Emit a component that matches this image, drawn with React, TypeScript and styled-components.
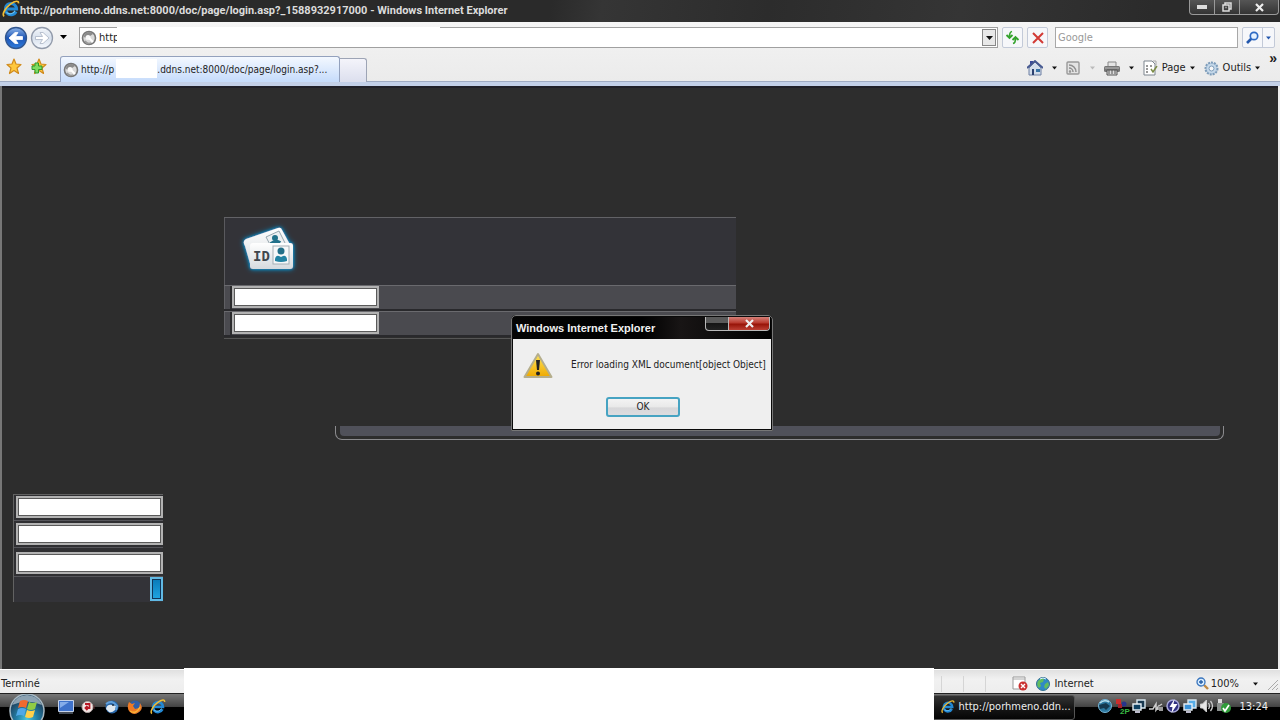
import React from "react";
import styled, { createGlobalStyle } from "styled-components";

const ui = '"DejaVu Sans Condensed", "DejaVu Sans", sans-serif';
const title = '"Liberation Sans", Arial, sans-serif';

const Global = createGlobalStyle`
  * { box-sizing: border-box; }
  body { margin: 0; background: #2d2d2d; font: 11px/14px ${ui}; color: #222; }
  button, input { font: inherit; color: inherit; }
  button { padding: 0; border: 0; background: none; }
`;

const Window = styled.div`
  position: relative;
  display: flex;
  flex-direction: column;
  min-height: 100vh;
  overflow: hidden;
`;

const TitleBar = styled.header`
  display: flex;
  align-items: flex-start;
  height: 22px;
  padding: 0 1px 0 2px;
  background: linear-gradient(100deg, #2a2a2a 0 43%, #353535 47%, #2c2c2c 60%, #353535 75%, #2b2b2b 90%);
  svg { flex: none; }
`;

const TitleText = styled.h1`
  flex: 1;
  margin: 4px 0 0;
  font: bold 11px/14px Roboto, ${title};
  color: #dcdcdc;
  white-space: nowrap;
`;

const Caption = styled.div`
  display: flex;
  height: 15px;
  border: 1px solid #999;
  border-top: 0;
  border-radius: 0 0 4px 4px;
  background: linear-gradient(#555, #343434);
  overflow: hidden;
`;

const CaptionButton = styled.button<{ $w: number }>`
  display: grid;
  place-items: center;
  width: ${(p) => p.$w}px;
  & + & { border-left: 1px solid #999; }
`;

const NavBar = styled.nav`
  display: flex;
  align-items: center;
  height: 31px;
  padding: 0 5px 0 4px;
  background: linear-gradient(#f5f5f5, #efefef);
`;

const NavIcons = styled.div`
  display: flex;
  align-items: center;
  width: 75px;
  button { display: flex; }
`;

const Address = styled.div`
  position: relative;
  flex: 1;
  display: flex;
  align-items: center;
  gap: 2px;
  height: 21px;
  padding-left: 1px;
  border: 1px solid #a0a0a0;
  background: #fff;
`;

const PlainInput = styled.input`
  flex: 1;
  min-width: 0;
  padding: 0;
  border: 0;
  outline: 0;
  background: none;
  &::placeholder { color: #999; opacity: 1; }
`;

const AddressMask = styled.span`
  position: absolute;
  left: 37px;
  top: -1px;
  width: 323px;
  height: 19px;
  background: #fff;
`;

const DropButton = styled.button`
  display: grid;
  place-items: center;
  width: 14px;
  height: 17px;
  margin-right: 1px;
  border: 1px solid #888;
  background: #e8e8e8;
`;

const ToolButton = styled.button`
  display: grid;
  place-items: center;
  width: 21px;
  height: 21px;
  margin-left: 4px;
  border: 1px solid #c3cad8;
  border-radius: 2px;
  background: #f6f7fa;
`;

const Search = styled.div`
  display: flex;
  width: 183px;
  height: 21px;
  margin: 0 4px 0 7px;
  padding-left: 2px;
  border: 1px solid #a8a8a8;
  background: #fff;
`;

const SearchButtons = styled.div`
  display: flex;
  height: 21px;
  border: 1px solid #c3cad8;
  border-radius: 2px;
  background: #f6f7fa;
  button { display: grid; place-items: center; width: 19px; }
  button + button { width: 12px; border-left: 1px solid #c3cad8; }
`;

const TabBar = styled.div`
  display: flex;
  align-items: flex-end;
  height: 33px;
  padding-left: 6px;
  border-bottom: 4px solid #c3d0e8;
  background: linear-gradient(#efefef, #ebebeb);
  box-shadow: inset 0 -1px #9fabc3;
`;

const Favorites = styled.div`
  display: flex;
  gap: 9px;
  width: 54px;
  padding-bottom: 7px;
  button { display: flex; }
`;

const Tab = styled.a`
  position: relative;
  display: flex;
  align-items: center;
  gap: 2px;
  width: 280px;
  height: 26px;
  padding-left: 2px;
  border: 1px solid #93a1bd;
  border-bottom: 0;
  border-radius: 3px 3px 0 0;
  background: linear-gradient(#f3f8ff, #c5dbfb);
  color: #222;
  font-size: 10px;
  text-decoration: none;
  white-space: nowrap;
  svg { flex: none; }
`;

const TabMask = styled.span`
  position: absolute;
  left: 55px;
  top: 2px;
  width: 41px;
  height: 19px;
  background: #fff;
`;

const TabHost = styled.span`
  margin-left: 41px;
`;

const NewTab = styled.button`
  width: 27px;
  height: 24px;
  border: 1px solid #9da4b5;
  border-bottom: 0;
  border-left: 0;
  border-radius: 0 3px 0 0;
  background: linear-gradient(#f4f4fa, #dcdfee);
`;

const Commands = styled.div`
  display: flex;
  align-items: center;
  gap: 9px;
  height: 28px;
  margin-left: auto;
  padding-right: 3px;
`;

const Command = styled.button<{ $gap?: number }>`
  display: flex;
  align-items: center;
  gap: ${(p) => p.$gap ?? 4}px;
`;

const More = styled.button`
  align-self: flex-start;
  font: bold 14px/8px ${title};
`;

const Page = styled.main`
  position: relative;
  flex: 1;
  display: flex;
  flex-direction: column;
  align-items: flex-start;
  padding-top: 131px;
  border-left: 2px solid #777;
  border-right: 2px solid #eee;
  background: #2d2d2d;
  box-shadow: inset 0 2px #202028;
`;

const LoginForm = styled.form`
  width: calc(40% + 2px);
  margin-left: 222px;
  border-top: 1px solid #626266;
`;

const LoginHead = styled.div`
  height: 67px;
  padding: 2px 0 0 11px;
  border-left: 1px solid #5a5a5e;
  background: #333338;
`;

const LoginRow = styled.div`
  display: flex;
  height: 26px;
  border-top: 1px solid #6a6a6e;
  border-bottom: 2px solid #29292c;
  background: #4a4a4f;
`;

const Gutter = styled.span`
  width: 8px;
  border-left: 1px solid #606064;
  box-shadow: inset -2px 0 #2c2c2e;
`;

const Field = styled.input`
  width: 147px;
  height: 22px;
  border: 2px solid #b2b2b2;
  outline: 0;
  background: #fff;
  box-shadow: inset 0 0 0 1px #5a5a5a;
`;

const LoginFoot = styled.div`
  height: 2px;
  border-bottom: 1px solid #555;
`;

const PanelFoot = styled.div`
  align-self: stretch;
  height: 14px;
  margin: 87px 54px 0 333px;
  padding: 0 3px 3px 4px;
  border: 1px solid #8b8b8e;
  border-top: 0;
  border-radius: 0 0 7px 7px;
  &::before {
    content: "";
    display: block;
    height: 10px;
    border-radius: 0 0 4px 4px;
    background: #50515a;
  }
`;

const SideForm = styled.form`
  display: flex;
  flex-direction: column;
  width: 150px;
  margin: 54px 0 66px 11px;
  border-top: 1px solid #626262;
  border-left: 1px solid #626262;
`;

const SideRow = styled.div<{ $h: number }>`
  display: flex;
  align-items: flex-end;
  height: ${(p) => p.$h}px;
  padding: 0 0 2px 2px;
  border-bottom: 1px solid #55555a;
  background: #2f2f32;
`;

const SideFoot = styled.div`
  display: flex;
  justify-content: flex-end;
  height: 25px;
  background: #333338;
`;

const Submit = styled.button`
  width: 13px;
  height: 24px;
  border: 2px solid #60b9e4;
  outline: 1px solid #135;
  outline-offset: -3px;
  background: linear-gradient(#087ab8, #20a5e2);
`;

const Dialog = styled.section`
  position: absolute;
  left: calc(50% - 129px);
  top: 229px;
  width: 262px;
  border: 2px solid #0a0a0a;
  border-radius: 5px 5px 0 0;
  outline: 1px solid #777;
  outline-offset: -1px;
  background: #efefef;
`;

const DialogTitle = styled.div`
  display: flex;
  align-items: flex-start;
  justify-content: space-between;
  height: 22px;
  padding: 0 1px 0 3px;
  background: linear-gradient(90deg, #050505, #000 50%, #181515 65%, #000);
  h2 {
    margin: 4px 0 0;
    font: bold 11px/14px ${title};
    color: #f0f0f0;
    white-space: nowrap;
  }
`;

const DialogCaption = styled.div`
  display: flex;
  height: 14px;
  border: 1px solid #b9b9b9;
  border-top: 0;
  border-radius: 0 0 4px 4px;
  overflow: hidden;
  background: linear-gradient(#5a5a5a 45%, #161616 50%, #222);
  span { width: 22px; }
  button {
    display: grid;
    place-items: center;
    width: 41px;
    border-left: 1px solid #b9b9b9;
    background: linear-gradient(#d58078, #b93a2e 45%, #971408 55%, #bc4034);
  }
`;

const Message = styled.div`
  display: flex;
  gap: 18px;
  padding: 12px 0 0 10px;
  svg { flex: none; }
  p { margin: 7px 0 0; font-size: 10px; white-space: nowrap; }
`;

const OkButton = styled.button`
  display: block;
  width: 74px;
  height: 20px;
  margin: 16px auto 12px 93px;
  border: 2px solid #46a3c2;
  border-radius: 3px;
  font-size: 10px;
  background: linear-gradient(#f3f3f3, #e9e9e9 50%, #d7d7d9 55%, #dcdcdf);
`;

const StatusBar = styled.footer`
  display: flex;
  align-items: center;
  justify-content: space-between;
  height: 24px;
  padding: 4px 2px 0 1px;
  border-top: 1px solid #fff;
  background: linear-gradient(#e0e0e0, #f1f1f1 40%, #ededed);
`;

const StatusGroup = styled.div`
  display: flex;
  align-items: center;
  gap: 4px;
`;

const Divider = styled.i<{ $after: number }>`
  width: 1px;
  height: 16px;
  margin-right: ${(p) => p.$after}px;
  background: #d5d5d5;
`;

const Zoom = styled.button<{ $before: number }>`
  display: flex;
  align-items: center;
  gap: 2px;
  margin-left: ${(p) => p.$before}px;
  svg:last-child { margin: 0 4px 0 12px; }
`;

const TaskBar = styled.footer`
  display: flex;
  justify-content: space-between;
  height: 27px;
  padding: 0 12px 0 8px;
  border-top: 1px solid #222;
  background: linear-gradient(#777, #454545 48%, #000 52%);
  color: #eee;
`;

const Launch = styled.div`
  display: flex;
  align-items: center;
  gap: 7px;
  button { display: flex; }
  button:first-child { align-self: flex-start; margin-right: 5px; }
`;

const Tray = styled.div`
  display: flex;
  align-items: center;
  gap: 1px;
  time { margin-left: 6px; }
  > svg { width: 16px; margin-bottom: 2px; }
`;

const TaskButton = styled.button`
  display: flex;
  align-items: center;
  gap: 3px;
  width: 143px;
  height: 25px;
  margin-right: 21px;
  padding-left: 8px;
  border: 1px solid #555;
  border-radius: 3px;
  background: linear-gradient(#333, #171717 50%, #050505);
  white-space: nowrap;
`;

const Redaction = styled.div`
  position: absolute;
  left: 184px;
  right: 346px;
  bottom: 0;
  height: 52px;
  background: #fff;
`;

const IeLogo = ({ size = 16 }: { size?: number }) => (
  <svg width={size} height={size} viewBox="0 0 16 16" fill="none">
    <path d="M12.5 10.3A5 5 0 1 1 13 8H4" stroke="#2389d4" strokeWidth="2.6" />
    <path d="M11.5 9.5A4.7 4.7 0 0 1 4 11" stroke="#6cc4f4" strokeWidth="1" />
    <path d="M2 14.5C-.5 13 3 7 7.5 3.7S15 .3 14.6 3" stroke="#f0bd35" strokeWidth="1.5" />
  </svg>
);

const Arrow = ({ color = "#111", size = 7 }: { color?: string; size?: number }) => (
  <svg width={size} height="4" viewBox="0 0 7 4"><path d="M0 0h7L3.500 4z" fill={color} /></svg>
);

const PageIcon = () => (
  <svg width="16" height="16" viewBox="0 0 16 16">
    <circle cx="8" cy="8" r="6.500" fill="#d9d9d9" stroke="#777" strokeWidth="1.600" />
    <path d="M3 7a5 5 0 0 1 9-3L9 6a3 3 0 0 0-4 2z" fill="#8b8b8b" />
    <circle cx="7" cy="7.500" r="2.500" fill="#f8f8f8" />
    <path d="M8 8l4 4" stroke="#fff" strokeWidth="2" />
    <path d="M4 11a5 5 0 0 0 6 2" stroke="#999" strokeWidth="1.500" fill="none" />
  </svg>
);

const NavCircle = ({ forward = false }: { forward?: boolean }) => {
  const id = forward ? "forwardFill" : "backFill";
  return (
    <svg width="26" height="26" viewBox="0 0 26 26">
      <defs>
        <linearGradient id={id} x2="0" y2="1">
          <stop stopColor={forward ? "#f4f7fb" : "#8db5ea"} />
          <stop offset=".5" stopColor={forward ? "#d7e0ec" : "#1e56b5"} />
          <stop offset="1" stopColor={forward ? "#f7faff" : "#2f7cdd"} />
        </linearGradient>
      </defs>
      <circle cx="12" cy="13" r="10.500" fill={`url(#${id})`} stroke={forward ? "#929bab" : "#31568e"} strokeWidth="1.3" />
      <path
        d={forward ? "M5.500 11.500h7L10 7.500h3l6 5.500-6 5.500h-3l2.500-4h-7z" : "M18.500 11.500h-7L14 7.500h-3L5 13l6 5.500h3l-2.500-4h7z"}
        fill="#fff"
        stroke={forward ? "#aab4c4" : "#fff"}
        strokeWidth=".8"
      />
    </svg>
  );
};

const Star = ({ plus = false }: { plus?: boolean }) => (
  <svg width="16" height="17" viewBox="0 0 16 17">
    <path d="M8 1l2 5 5 .5-4 3.500 1.500 5.500L8 12.500 3.500 15.500 5 10 1 6.500 6 6z" fill="#ffc83d" stroke="#d08a1c" strokeWidth="1.2" strokeLinejoin="round" />
    {plus && <path d="M4 5h3.500v3H11v3.500H7.500V15H4v-3.500H1V8h3z" fill="#7fdc62" stroke="#2f9a2c" />}
  </svg>
);

const Refresh = () => (
  <svg width="15" height="15" viewBox="0 0 15 15" fill="none" stroke="#35a32e" strokeWidth="1.800">
    <path d="M7 1.500C5 2 4.500 3 4.500 7M1.500 5l3 3 3-3M8 13.500c2-.5 2.500-1.500 2.500-5.500M7.500 10l3-3 3 3" />
  </svg>
);

const Stop = () => (
  <svg width="12" height="12" viewBox="0 0 12 12" stroke="#d23a35" strokeWidth="2"><path d="M1 1l10 10M11 1L1 11" /></svg>
);

const Magnifier = ({ plus = false }: { plus?: boolean }) => (
  <svg width="13" height="13" viewBox="0 0 13 13" fill="none">
    {plus ? (
      <>
        <path d="M8 8l4 4" stroke="#c08a43" strokeWidth="2.400" />
        <circle cx="5" cy="5" r="4" fill="#d8edff" stroke="#3a75bd" strokeWidth="1.3" />
        <path d="M3 5h4M5 3v4" stroke="#245ca5" strokeWidth="1.3" />
      </>
    ) : (
      <>
        <path d="M5.500 7.500L1 12" stroke="#2458ad" strokeWidth="2.600" />
        <circle cx="8" cy="5" r="3.700" fill="#e6f2ff" stroke="#2f6bc4" strokeWidth="1.700" />
      </>
    )}
  </svg>
);

const Home = () => (
  <svg width="16" height="16" viewBox="0 0 16 16">
    <path d="M3 1h3v4H3z" fill="#3a4a9a" />
    <path d="M2 8l6-6 6 6v7H2z" fill="#d3ddea" stroke="#6e80a4" />
    <path d="M0 8l8-7 8 7" stroke="#44578f" strokeWidth="1.800" fill="none" />
    <path d="M5 9h2v6H5z" fill="#2c4270" /><path d="M9 9h4v3H9z" fill="#3973a5" />
  </svg>
);

const Feed = () => (
  <svg width="14" height="14" viewBox="0 0 14 14" fill="none" stroke="#8f8f8f" strokeWidth="1.500">
    <rect x="1" y="1" width="12" height="12" rx="1" fill="#e3e3e3" stroke="#999" strokeWidth="1.400" />
    <path d="M3 4a7 7 0 0 1 7 7M3 7a4 4 0 0 1 4 4" /><circle cx="4" cy="10.500" r=".5" />
  </svg>
);

const Printer = () => (
  <svg width="16" height="15" viewBox="0 0 16 15">
    <path d="M4 1h8v5H4z" fill="#e4e4e4" stroke="#888" />
    <rect x="0" y="5" width="16" height="6" rx="1.500" fill="#777" />
    <path d="M1 7h14" stroke="#bbb" /><path d="M3 9h10v5H3z" fill="#ddd" stroke="#555" /><path d="M5 9v4M8 9v4M11 9v4" stroke="#555" />
  </svg>
);

const PageEdit = () => (
  <svg width="15" height="16" viewBox="0 0 15 16" fill="none">
    <path d="M1 1h8l3 3v11H1z" fill="#fff" stroke="#7d858e" />
    <path d="M3 6h2M7 6h2M3 9h2M3 12h2" stroke="#777" strokeWidth="1.300" />
    <path d="M8 9l2 3 4-6" stroke="#7b8b45" strokeWidth="1.500" /><path d="M10 1h3v4" stroke="#aaa" />
  </svg>
);

const Gear = () => (
  <svg width="15" height="15" viewBox="0 0 15 15">
    <circle cx="7.500" cy="7.500" r="6" fill="#b9cee2" stroke="#7e9dba" strokeWidth="2" strokeDasharray="2 1" />
    <circle cx="7.500" cy="7.500" r="4.500" fill="#c6d9ea" /><circle cx="7.500" cy="7.500" r="2.500" fill="#f7f7f7" stroke="#7e9dba" />
  </svg>
);

const IdCards = () => (
  <svg width="68" height="62" viewBox="0 0 68 62">
    <defs>
      <filter id="glow" x="-30%" y="-30%" width="160%" height="160%">
        <feDropShadow dx="0" dy="0" stdDeviation="1.500" floodColor="#16a6e6" floodOpacity=".9" />
        <feDropShadow dx="0" dy="0" stdDeviation="2.500" floodColor="#0a8fd0" floodOpacity=".9" />
      </filter>
      <linearGradient id="card" x2="0" y2="1"><stop stopColor="#fff" /><stop offset="1" stopColor="#d5dade" /></linearGradient>
    </defs>
    <g filter="url(#glow)">
      <path d="M9 26q-3-5 1-7L42 8q3-1 4 2l11 20-42 17z" fill="url(#card)" />
      <path d="M30 17l13-6 8 16-13 5z" fill="#edf0f2" stroke="#97a6ae" />
      <circle cx="39" cy="18" r="3" fill="#23718a" /><path d="M35 24q5-4 9-1" stroke="#23718a" strokeWidth="4" />
      <rect x="14" y="23" width="43" height="26" rx="3" fill="url(#card)" />
    </g>
    <text x="17" y="41" fontFamily="DejaVu Sans Mono" fontWeight="bold" fontSize="14" fill="#40464c">ID</text>
    <rect x="37" y="26" width="16" height="18" fill="#f6f8f9" stroke="#a5b0b6" />
    <circle cx="45" cy="31" r="3.500" fill="#236f88" /><path d="M39 41v-2q1-4 4-3l2 1 2-1q3-1 4 3v2q-6 2-12 0z" fill="#2383a3" />
  </svg>
);

const Warning = () => (
  <svg width="30" height="30" viewBox="0 0 30 30">
    <defs><linearGradient id="warn" x2="0" y2="1"><stop stopColor="#ffe65a" /><stop offset="1" stopColor="#eea800" /></linearGradient></defs>
    <path d="M15 3L28.500 26H1.500z" fill="url(#warn)" stroke="#b5ae8c" strokeWidth="2" strokeLinejoin="round" />
    <path d="M13 9h4l-1 10h-2z" fill="#222" /><circle cx="15" cy="22.500" r="2" fill="#222" />
  </svg>
);

const CloseMark = () => (
  <svg width="11" height="9" viewBox="0 0 11 9"><path d="M2 1l7 7M9 1L2 8" stroke="#eee" strokeWidth="2.200" /></svg>
);

const Blocked = () => (
  <svg width="16" height="15" viewBox="0 0 16 15"><path d="M1 1h12v12H1z" fill="#fff" stroke="#999" /><path d="M1 3h12" stroke="#aaa" /><circle cx="11" cy="10" r="4.500" fill="#ca3030" /><path d="M9 8l4 4m0-4l-4 4" stroke="#fff" strokeWidth="1.400" /></svg>
);

const Globe = () => (
  <svg width="14" height="14" viewBox="0 0 14 14"><circle cx="7" cy="7" r="6.500" fill="#3089c5" stroke="#347091" /><path d="M2 4q4-4 6-2l-1 3-3 1 1 3-2 2Q0 8 2 4m7 3l3-2 1 3-3 4-2-2z" fill="#63bd5c" /><path d="M4 2q3-2 6 0" stroke="#d9f4ff" fill="none" /></svg>
);

const StartOrb = () => (
  <svg width="38" height="26" viewBox="0 0 38 26">
    <defs><radialGradient id="orb" cy=".75" r=".6"><stop stopColor="#4cc6dc" /><stop offset=".5" stopColor="#2280a8" /><stop offset="1" stopColor="#1f4562" /></radialGradient></defs>
    <circle cx="19" cy="17" r="17" fill="url(#orb)" stroke="#a9bac4" strokeWidth="1.500" />
    <path d="M4 11Q9 1 19 1T34 11Q19 4 4 11" fill="#d5e1e8" opacity=".6" />
    <path d="M12 7q4-2 8 0l-2 7q-4-2-8 0z" fill="#ef6a2e" /><path d="M21 8q4 2 8 0l-2 7q-4 2-8 0z" fill="#8fcb45" />
    <path d="M10 15q4-2 8 0l-2 7q-4-2-8 0z" fill="#50a8e8" /><path d="M19 16q4 2 8 0l-2 7q-4 2-8 0z" fill="#ffd04b" />
  </svg>
);

const Desktop = () => (
  <svg width="16" height="14" viewBox="0 0 16 14"><path d="M.5.5h15v11H.5z" fill="#3f72ca" stroke="#c5d2e8" /><path d="M2 2h9L2 8z" fill="#86ade9" /><path d="M1 13h14" stroke="#8a99ad" /></svg>
);

const RedBadge = () => (
  <svg width="16" height="16" viewBox="0 0 16 16" fill="none"><circle cx="6.500" cy="8" r="5.500" fill="#f4e7e5" stroke="#b7a9a8" /><path d="M4 5h4.500v4H5M6.500 7L4.500 9l2 2" stroke="#b91a27" strokeWidth="1.800" /><path d="M13 6v4" stroke="#633" /></svg>
);

const Bird = () => (
  <svg width="16" height="16" viewBox="0 0 16 16"><circle cx="8" cy="8" r="6.500" fill="#2866a8" /><path d="M2 10q1-5 6-4l4 1-1 4q-3 3-6 2z" fill="#dfe8ef" /><path d="M2 5q6-5 11 2l-1 4" stroke="#5f9fda" strokeWidth="2" fill="none" /><circle cx="9" cy="6" r="1" fill="#234" /></svg>
);

const Fox = () => (
  <svg width="16" height="16" viewBox="0 0 16 16"><circle cx="8" cy="8" r="6.500" fill="#315fa7" /><path d="M2 3l3 2 3-1-2 3 2 3 4-1 1-5q4 6-1 9-5 4-9 0Q-1 9 2 3" fill="#ee7a24" /><path d="M3 12q6 4 10-4" stroke="#f9b436" strokeWidth="1.500" fill="none" /></svg>
);

const Screens = ({ bright = false }: { bright?: boolean }) => (
  <svg width="16" height="16" viewBox="0 0 16 16"><path d="M6 2h8v8H6z" fill={bright ? "#58aee8" : "#173850"} stroke="#d9e7ef" strokeWidth="1.400" /><path d="M2 6h8v6H2z" fill={bright ? "#3b93d8" : "#0f4263"} stroke="#e6eef4" strokeWidth="1.400" /><path d="M4 14h5" stroke="#bbc" strokeWidth="2" /></svg>
);

const Bolt = () => (
  <svg width="15" height="16" viewBox="0 0 15 16"><circle cx="7.500" cy="8" r="6" fill="#303080" stroke="#a7a7d7" strokeWidth="1.500" /><path d="M9 1L4 9h3l-1 6 6-9H8z" fill="#fff" /></svg>
);

const Speaker = () => (
  <svg width="15" height="14" viewBox="0 0 15 14" stroke="#ccc" fill="none"><path d="M1 5h2l4-4v12L3 9H1z" fill="#e7e7e7" /><path d="M9 4q2 3 0 6m2-8q4 5 0 10" strokeWidth="1.300" /></svg>
);

const Blocks = () => (
  <svg width="16" height="17" viewBox="0 0 16 17"><path d="M2 1h5v5H2z" fill="#c92f2d" /><circle cx="10" cy="6" r="2.500" fill="#26348c" /><path d="M4 6h4v4H4z" fill="#a3222b" /><text x="6" y="16" fill="#38b943" fontFamily="Liberation Sans" fontSize="8" fontWeight="bold">2P</text></svg>
);

const Plug = () => (
  <svg width="16" height="14" viewBox="0 0 16 14" stroke="#ccc" fill="none"><path d="M1 10h4l3-5v6l2-3v3M11 7l3-2M11 9h4M11 11h4" strokeWidth="1.500" /></svg>
);

const SafeRemove = () => (
  <svg width="16" height="16" viewBox="0 0 16 16"><path d="M2 1h4v4H2z" fill="#ddd" /><path d="M1 5h7v8H1z" fill="#8b908e" /><circle cx="10" cy="10" r="5" fill="#2f9b39" /><path d="M7 10l2 3 4-6" fill="none" stroke="#fff" strokeWidth="1.700" /></svg>
);

const Rings = () => (
  <svg width="16" height="16" viewBox="0 0 16 16"><circle cx="8" cy="8" r="6.500" fill="#2d789f" stroke="#76b6d8" /><path d="M2 7l7-2 4 3-4 4-2-2-4 1z" fill="#15384e" /><path d="M3 5q4-4 9-1" stroke="#b9dfed" strokeWidth="1.500" fill="none" /></svg>
);

export default function App() {
  return (
    <Window>
      <Global />
      <TitleBar>
        <IeLogo size={18} />
        <TitleText>http://porhmeno.ddns.net:8000/doc/page/login.asp?_1588932917000 - Windows Internet Explorer</TitleText>
        <Caption>
          <CaptionButton $w={24} aria-label="Minimize"><svg width="10" height="4"><path d="M0 0h10v4H0z" fill="#ddd" /></svg></CaptionButton>
          <CaptionButton $w={25} aria-label="Restore"><svg width="10" height="10" fill="none" stroke="#ddd" strokeWidth="1.500"><path d="M3 3V1h6v6H7M1 3h6v6H1zM3.500 5.500h1" /></svg></CaptionButton>
          <CaptionButton $w={39} aria-label="Close"><CloseMark /></CaptionButton>
        </Caption>
      </TitleBar>
      <NavBar>
        <NavIcons>
          <button aria-label="Back"><NavCircle /></button>
          <button aria-label="Forward"><NavCircle forward /></button>
          <button aria-label="Recent pages"><svg width="16" height="5" viewBox="0 0 16 5"><path d="M4 0h7L7.500 4z" /></svg></button>
        </NavIcons>
        <Address>
          <PageIcon />
          <PlainInput aria-label="Address" defaultValue="http" />
          <AddressMask />
          <DropButton aria-label="Show addresses"><Arrow /></DropButton>
        </Address>
        <ToolButton aria-label="Refresh"><Refresh /></ToolButton>
        <ToolButton aria-label="Stop"><Stop /></ToolButton>
        <Search><PlainInput aria-label="Search" placeholder="Google" /></Search>
        <SearchButtons>
          <button aria-label="Search"><Magnifier /></button>
          <button aria-label="Search options"><Arrow size={5} color="#2458ad" /></button>
        </SearchButtons>
      </NavBar>
      <TabBar>
        <Favorites>
          <button aria-label="Favorites"><Star /></button>
          <button aria-label="Add favorite"><Star plus /></button>
        </Favorites>
        <Tab href="#">
          <PageIcon />
          <span>http://p</span>
          <TabMask />
          <TabHost>.ddns.net:8000/doc/page/login.asp?...</TabHost>
        </Tab>
        <NewTab aria-label="New tab" />
        <Commands>
          <Command $gap={9} aria-label="Home"><Home /><Arrow size={5} /></Command>
          <Command $gap={10} aria-label="Feeds"><Feed /><Arrow size={5} color="#bbb" /></Command>
          <Command $gap={9} aria-label="Print"><Printer /><Arrow size={5} /></Command>
          <Command><PageEdit /><span>Page</span><Arrow size={5} /></Command>
          <Command><Gear /><span>Outils</span><Arrow size={5} /></Command>
          <More aria-label="More">»</More>
        </Commands>
      </TabBar>
      <Page>
        <LoginForm>
          <LoginHead><IdCards /></LoginHead>
          <LoginRow><Gutter /><Field aria-label="User name" /></LoginRow>
          <LoginRow><Gutter /><Field type="password" aria-label="Password" /></LoginRow>
          <LoginFoot />
        </LoginForm>
        <PanelFoot />
        <SideForm>
          <SideRow $h={26}><Field aria-label="Current value" /></SideRow>
          <SideRow $h={27}><Field aria-label="New value" /></SideRow>
          <SideRow $h={29}><Field aria-label="Confirm value" /></SideRow>
          <SideFoot><Submit aria-label="Submit" /></SideFoot>
        </SideForm>
        <Dialog role="alertdialog" aria-labelledby="alert-title">
          <DialogTitle>
            <h2 id="alert-title">Windows Internet Explorer</h2>
            <DialogCaption><span /><button aria-label="Close"><CloseMark /></button></DialogCaption>
          </DialogTitle>
          <Message><Warning /><p>Error loading XML document[object Object]</p></Message>
          <OkButton>OK</OkButton>
        </Dialog>
      </Page>
      <StatusBar>
        <span>Terminé</span>
        <StatusGroup>
          <Divider $after={17} /><Divider $after={17} /><Divider $after={22} />
          <Blocked /><span /><Globe /><span>Internet</span>
          <Zoom $before={98}><Magnifier plus /><span>100%</span><Arrow size={5} /></Zoom>
          <svg width="12" height="12" stroke="#aaa"><path d="M2 12L12 2M6 12l6-6M10 12l2-2" /></svg>
        </StatusGroup>
      </StatusBar>
      <TaskBar>
        <Launch>
          <button aria-label="Start"><StartOrb /></button>
          <button aria-label="Desktop"><Desktop /></button>
          <button aria-label="Media"><RedBadge /></button>
          <button aria-label="Mail"><Bird /></button>
          <button aria-label="Firefox"><Fox /></button>
          <button aria-label="Internet Explorer"><IeLogo /></button>
        </Launch>
        <Tray>
          <TaskButton><IeLogo size={14} /><span>http://porhmeno.ddn...</span></TaskButton>
          <Rings /><Blocks /><Screens /><Plug /><Bolt /><Screens bright /><Speaker /><SafeRemove />
          <time>13:24</time>
        </Tray>
      </TaskBar>
      <Redaction />
    </Window>
  );
}
